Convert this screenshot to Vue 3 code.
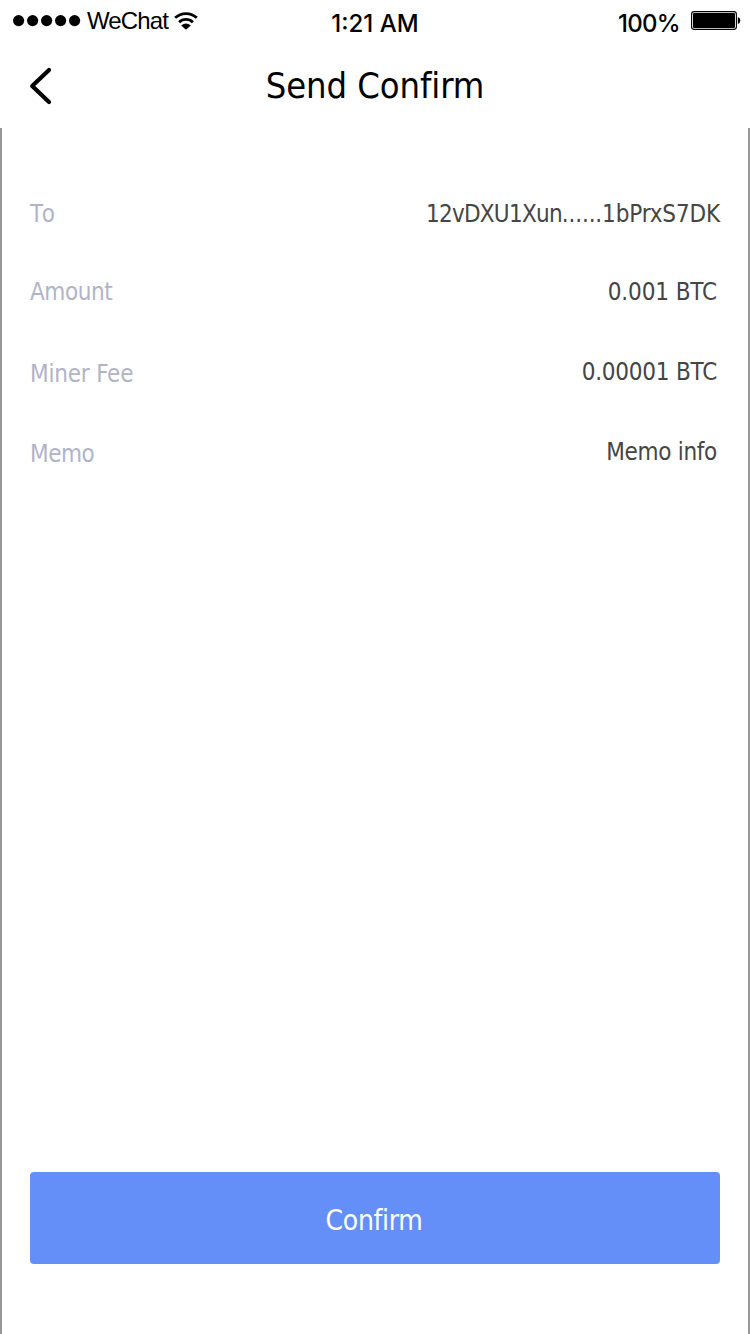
<script setup>
const rows = [
  { key: 'to', label: 'To', value: ['12vDXU1Xun', '......1bPrxS7DK'] },
  { key: 'amount', label: 'Amount', value: ['0.001 BTC'] },
  { key: 'fee', label: 'Miner Fee', value: ['0.00001 BTC'] },
  { key: 'memo', label: 'Memo', value: ['Memo info'] },
]
</script>

<template>
  <div class="screen">
    <header class="top">
      <div class="status">
        <div class="carrier">
          <svg class="signal" width="68" height="12" viewBox="0 0 68 12">
            <circle v-for="n in 5" :key="n" :cx="n * 14 - 8.4" cy="5.6" r="5.6" />
          </svg>
          <span class="network">WeChat</span>
          <svg class="wifi" width="24" height="18" viewBox="0 0 24 18">
            <path d="M1.2 5.8C7.1 0.1 16.9 0.1 22.8 5.8" />
            <path d="M5.1 10.2C9 6.5 15 6.5 18.9 10.2" />
            <path class="solid" d="M7.2 13.4Q12 9.8 16.8 13.4L12 17.8Z" />
          </svg>
        </div>
        <span class="clock">1:21 AM</span>
        <div class="power">
          <span class="percent">100%</span>
          <svg class="battery" width="50" height="20" viewBox="0 0 50 20">
            <rect class="case" x="0.6" y="0.6" width="44.8" height="17.8" rx="2.6" />
            <rect x="2" y="2" width="42" height="15" rx="1.3" />
            <path d="M46.8 6Q49.3 6.6 49.3 9.5T46.8 13Z" />
          </svg>
        </div>
      </div>
      <nav class="bar">
        <svg class="back" width="24" height="38" viewBox="0 0 24 38">
          <path d="M20 3L3.2 19L20 35" />
        </svg>
        <h1 class="title">Send Confirm</h1>
      </nav>
    </header>
    <main class="body">
      <dl class="details">
        <div v-for="row in rows" :key="row.key" class="row" :class="row.key">
          <dt>{{ row.label }}</dt>
          <dd><span v-for="part in row.value" :key="part">{{ part }}</span></dd>
        </div>
      </dl>
      <button class="confirm" type="button"><span>Confirm</span></button>
    </main>
  </div>
</template>

<style>
body { margin: 0; background: #fff; }
</style>

<style scoped>
.screen {
  display: flex;
  flex-direction: column;
  box-sizing: border-box;
  width: 750px;
  height: 1334px;
  overflow: hidden;
  background: #fff;
  color: #000;
  font-family: "DejaVu Sans Condensed", "DejaVu Sans", sans-serif;
  font-stretch: condensed;
  font-variant-ligatures: none;
}
.top { height: 128px; flex: none; }
.status {
  display: grid;
  grid-template-columns: 250px 250px 250px;
  height: 44px;
  white-space: nowrap;
}
.carrier { display: flex; align-items: flex-start; padding-left: 13px; }
.signal { margin-top: 15px; }
.network {
  width: 81px;
  margin: 6px 6px 0;
  font: 24px/30px "Liberation Sans", sans-serif;
  letter-spacing: -0.85px;
}
.wifi { margin-top: 12px; }
.wifi path { fill: none; stroke: #000; stroke-width: 2.8; }
.wifi .solid { fill: #000; stroke: none; }
.clock {
  padding-top: 9px;
  text-align: center;
  font: 500 24px/30px Inter, sans-serif;
}
.power { display: flex; justify-content: flex-end; padding-right: 9px; }
.percent {
  margin: 9px 11px 0 0;
  font: 500 24px/30px Inter, sans-serif;
  letter-spacing: -0.7px;
}
.battery { margin-top: 11px; }
.battery .case { fill: none; stroke: #000; stroke-width: 1.1; }
.bar {
  display: grid;
  grid-template-columns: 100px 1fr 100px;
  height: 84px;
}
.back { margin: 23px 0 0 29px; }
.back path {
  fill: none;
  stroke: #000;
  stroke-width: 4.2;
  stroke-linecap: round;
  stroke-linejoin: round;
}
.title {
  margin: 18px 0 0;
  font-size: 36px;
  line-height: 48px;
  font-weight: 400;
  letter-spacing: -0.08px;
  text-align: center;
}
.body {
  display: flex;
  flex-direction: column;
  justify-content: space-between;
  flex: 1;
  box-sizing: border-box;
  padding: 66px 28px 70px;
  border: solid #979797;
  border-width: 0 2px;
}
.details { margin: 0; font-size: 24px; line-height: 40px; }
.row { display: flex; justify-content: space-between; height: 40px; margin-bottom: 40px; }
.row.to { margin-bottom: 38px; }
.row dt { color: #b1b4c8; }
.row dd { margin: 0 3px 0 0; color: #454545; }
.row.to dt { font-kerning: none; letter-spacing: -1.5px; }
.row.to dd { margin-right: 0; letter-spacing: -0.15px; }
.row.to dd span:first-child { letter-spacing: -0.75px; }
.row.amount dt { letter-spacing: -0.45px; }
.row.amount dd { letter-spacing: -0.12px; }
.row.fee dt { letter-spacing: -0.2px; }
.row.fee dd { letter-spacing: -0.22px; }
.row.memo dt { letter-spacing: -0.5px; }
.row.memo dd { letter-spacing: -0.3px; }
.row.fee dt, .row.memo dt { padding-top: 2px; }
.confirm {
  height: 92px;
  padding: 6px 2px 0 0;
  border: 0;
  border-radius: 4px;
  background: #648ff9;
  color: #fff;
  font-family: inherit;
  font-stretch: condensed;
  font-size: 28px;
  line-height: 40px;
  letter-spacing: -0.35px;
}
</style>
